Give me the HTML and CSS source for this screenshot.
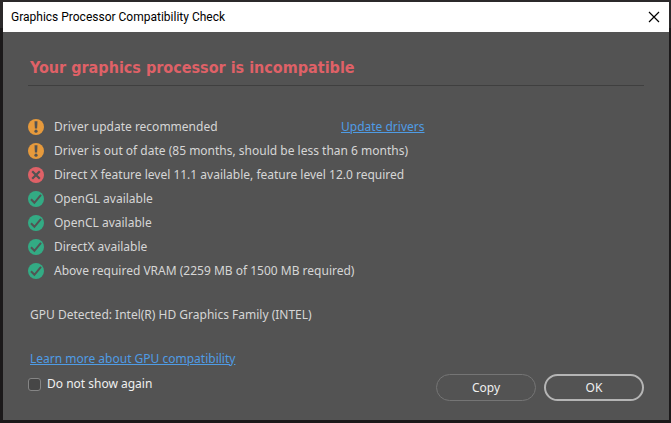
FILE: index.html
```html
<!DOCTYPE html>
<html lang="en">
<head>
    <meta charset="UTF-8">
    <meta name="viewport" content="width=device-width, initial-scale=1.0">
    <title>Graphics Processor Compatibility Check</title>
    <link rel="stylesheet" href="styles.css">
</head>
<body>
    <!-- shared status icons -->
    <svg class="sprite" aria-hidden="true">
        <symbol id="icon-warning" viewBox="0 0 16 16">
            <circle cx="8" cy="8" r="8" fill="#e69a3c"/>
            <path d="M6.5 2.2h3L9.1 9.6H6.9z" fill="#535353"/>
            <circle cx="8" cy="12.2" r="1.6" fill="#535353"/>
        </symbol>
        <symbol id="icon-error" viewBox="0 0 16 16">
            <circle cx="8" cy="8" r="8" fill="#df6167"/>
            <path d="M4.2 4.2l7.6 7.6M11.8 4.2l-7.6 7.6" stroke="#535353" stroke-width="2.2" fill="none"/>
        </symbol>
        <symbol id="icon-ok" viewBox="0 0 16 16">
            <circle cx="8" cy="8" r="8" fill="#33ab84"/>
            <path d="M3 8.2l3.4 3.6L13 3.8" stroke="#535353" stroke-width="2" fill="none"/>
        </symbol>
    </svg>

    <div class="dialog" role="dialog" aria-labelledby="dialog-title">
        <header class="titlebar">
            <span id="dialog-title">Graphics Processor Compatibility Check</span>
            <button class="close" type="button" aria-label="Close">
                <svg width="10" height="10" viewBox="0 0 10 10"><path d="M0 0l10 10M10 0L0 10" stroke="#000" stroke-width="1.2"/></svg>
            </button>
        </header>

        <main class="content">
            <h1>Your graphics processor is incompatible</h1>

            <ul class="checks">
                <li><svg class="icon"><use href="#icon-warning"/></svg><span class="first">Driver update recommended</span><a href="#drivers">Update drivers</a></li>
                <li><svg class="icon"><use href="#icon-warning"/></svg><span>Driver is out of date (85 months, should be less than 6 months)</span></li>
                <li><svg class="icon"><use href="#icon-error"/></svg><span>Direct X feature level 11.1 available, feature level 12.0 required</span></li>
                <li><svg class="icon"><use href="#icon-ok"/></svg><span>OpenGL available</span></li>
                <li><svg class="icon"><use href="#icon-ok"/></svg><span>OpenCL available</span></li>
                <li><svg class="icon"><use href="#icon-ok"/></svg><span>DirectX available</span></li>
                <li><svg class="icon"><use href="#icon-ok"/></svg><span>Above required VRAM (2259 MB of 1500 MB required)</span></li>
            </ul>

            <p class="gpu">GPU Detected: Intel(R) HD Graphics Family (INTEL)</p>

            <footer class="footer">
                <div class="options">
                    <a href="#learn">Learn more about GPU compatibility</a>
                    <div class="option">
                        <input type="checkbox" id="hide">
                        <label for="hide">Do not show again</label>
                    </div>
                </div>
                <div class="buttons">
                    <button class="btn" type="button">Copy</button>
                    <button class="btn primary" type="button">OK</button>
                </div>
            </footer>
        </main>
    </div>
</body>
</html>
```
FILE: styles.css
```css
* { box-sizing: border-box; }
body {
    margin: 0;
    padding: 2px 2px 3px 3px;
    min-height: 100vh;
    display: flex;
    background: linear-gradient(#2b292a 28px, #1b191a 28px);
    color: #d6d6d6;
    font-family: Tahoma, "Noto Sans", sans-serif;
    font-size: 12px;
    line-height: 16px;
}
.sprite { position: absolute; width: 0; height: 0; }
.dialog {
    flex: 1;
    display: flex;
    flex-direction: column;
    background: #535353;
}
.titlebar {
    display: flex;
    align-items: center;
    justify-content: space-between;
    height: 30px;
    padding: 0 10px 0 8px;
    background: #fff;
    color: #000;
    font-family: "Segoe UI", Roboto, sans-serif;
}
.close {
    display: flex;
    padding: 0;
    border: none;
    background: none;
}
.close svg { overflow: visible; }
.content {
    flex: 1;
    display: flex;
    flex-direction: column;
    padding: 24px 25px 19px;
}
h1 {
    margin: 0;
    padding: 0 2px 5px;
    border-bottom: 1px solid #3f3f3f;
    color: #df6167;
    font-family: Tahoma, "DejaVu Sans Condensed", "DejaVu Sans", sans-serif;
    font-size: 16px;
    line-height: 24px;
}
.checks {
    margin: 29px 0 0;
    padding: 0;
    list-style: none;
}
.checks li {
    display: flex;
    align-items: center;
    height: 24px;
}
.icon {
    width: 16px;
    height: 16px;
    margin-right: 10px;
}
.first { width: 287px; }
a { color: #4f9ce5; }
.gpu { margin: 24px 2px 0; }
.footer {
    display: flex;
    align-items: flex-end;
    justify-content: space-between;
    margin-top: auto;
}
.options a { margin-left: 2px; }
.option {
    display: flex;
    align-items: center;
    gap: 6px;
    margin: 9px 0;
    color: #f0f0f0;
}
.option input {
    appearance: none;
    width: 13px;
    height: 13px;
    margin: 0;
    border: 1px solid #858585;
    border-radius: 3px;
    background: #464646;
}
.buttons {
    display: flex;
    gap: 8px;
}
.btn {
    width: 100px;
    height: 27px;
    padding: 0;
    border: 1px solid #757575;
    border-radius: 14px;
    background: none;
    color: #f0f0f0;
    font: inherit;
}
.primary { border: 2px solid #b5b5b5; }
```
